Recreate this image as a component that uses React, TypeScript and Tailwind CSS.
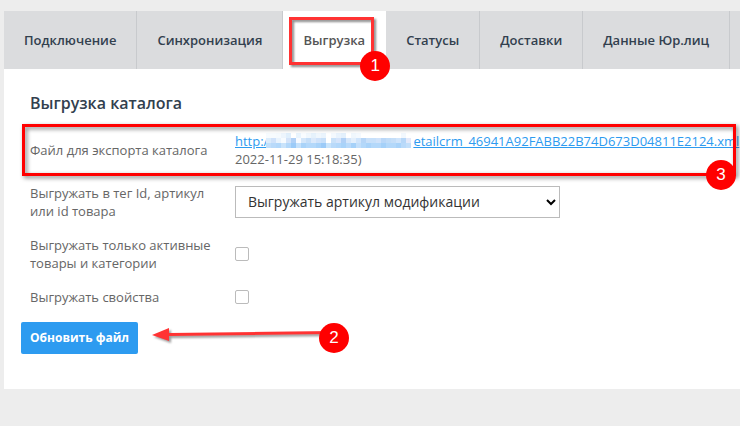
import React from 'react'

const tabs = ['Подключение', 'Синхронизация', 'Выгрузка', 'Статусы', 'Доставки', 'Данные Юр.лиц']

// hidden part of the link, 5px cells
const mosaic = [
  ['#f7fbfe', '#f7fbfe', '#f5fafe', '#edf5fd', '#e0effc', '#ffffff', '#e9f4fd', '#f9fcff', '#f0f7fd', '#e6f2fc', '#f0f7fd', '#eaf4fd', '#ffffff', '#f4f9fe', '#e9f3fd', '#e3f0fc', '#ffffff', '#f0f7fd', '#f4f9fe', '#ffffff', '#ffffff', '#ffffff', '#ffffff', '#ffffff', '#ffffff', '#ffffff', '#ffffff', '#f2f8fe', '#ffffff'],
  ['#dcecfb', '#d0e2fa', '#e9f3fd', '#f7fbff', '#d3e3f9', '#b0d0f6', '#f7faff', '#d3e6fa', '#c5def8', '#dbe9fb', '#cfe2fa', '#c7dff9', '#ffffff', '#c9e1f9', '#d5e4fb', '#b0d0f6', '#d5e6fa', '#e3effc', '#cfe4fb', '#b5d5f7', '#c9e0f9', '#c7e0fa', '#cfe2fa', '#b9d7f8', '#c0dcf8', '#c5def8', '#cfe4fb', '#b7d7f8', '#e3e9fa'],
  ['#c3dffa', '#b9dafa', '#b3d8fa', '#c9e3fb', '#b3d8fa', '#9ccbf8', '#c5e1fb', '#a9d3f9', '#b3d8fa', '#b3d8fa', '#a9d3f9', '#9ccbf8', '#c9e4fb', '#b9dafa', '#b3d8fa', '#a9d3f9', '#b9dafa', '#a5d1f9', '#c3dffa', '#b3d8fa', '#a9d3f9', '#b3d8fa', '#b3d8fa', '#a5d1f9', '#b3d8fa', '#b3d8fa', '#a9d3f9', '#b9dafa', '#c3dffa'],
]

const Badge = ({ n, className }: { n: number; className: string }) => (
  <span className={`absolute flex h-[30px] w-[30px] items-center justify-center rounded-full bg-[#ff0000] font-['Liberation_Sans',sans-serif] text-[17px] text-white ${className}`}>
    {n}
  </span>
)

const App = () => {
  return (
    <div className="min-h-screen overflow-hidden bg-[#ededed] pt-[11px] pl-1 font-['Open_Sans',sans-serif] text-[13px] leading-[18px] text-[#666]">
      <nav className="flex bg-[#dbdcde]">
        {tabs.map((tab) => (
          <div key={tab} className="relative shrink-0">
            <a
              href="#"
              className={`block border-r px-5 py-5 font-semibold ${
                tab === 'Выгрузка' ? 'border-white bg-white text-[#555]' : 'border-[#c8cacd] text-[#32404e]'
              }`}
            >
              {tab}
            </a>
            {tab === 'Выгрузка' && (
              <>
                <div className="absolute left-1.5 right-3 top-1.5 h-12 border-3 border-[#ff3333] drop-shadow-[2px_2px_1px_rgba(0,0,0,0.45)]" />
                <Badge n={1} className="-right-1 top-10 z-10" />
              </>
            )}
          </div>
        ))}
      </nav>

      <form className="bg-white px-4 pt-6 pb-[35px]" onSubmit={(e) => e.preventDefault()}>
        <h2 className="pl-2.5 text-base leading-[20px] font-semibold text-[#32404e]">Выгрузка каталога</h2>

        <div className="relative mt-[19px] flex items-center pl-2.5">
          <div className="w-[205px] shrink-0">Файл для экспорта каталога</div>
          <div className="whitespace-nowrap">
            <div className="flex">
              <a href="#" className="flex text-[#2d9bf0] underline">
                http:/
                <span className="-ml-0.5 mr-0.5 mt-px grid grid-cols-[repeat(29,5px)] auto-rows-[5px]">
                  {mosaic.flat().map((color, i) => (
                    <span key={i} style={{ backgroundColor: color }} />
                  ))}
                </span>
                etailcrm_46941A92FABB22B74D673D04811E2124.xml
              </a>
            </div>
            <div>2022-11-29 15:18:35)</div>
          </div>
          <div className="absolute -inset-y-2 left-0.5 -right-3 border-3 border-[#ff0000] drop-shadow-[2px_2px_2px_rgba(0,0,0,0.5)]" />
          <Badge n={3} className="-right-3 top-7 z-10" />
        </div>

        <div className="mt-4 flex items-center pl-2.5">
          <label htmlFor="tag" className="w-[205px] shrink-0 pr-4">Выгружать в тег Id, артикул или id товара</label>
          <div className="relative w-[325px]">
            <select id="tag" className="block h-8 w-full appearance-none border border-[#bbb] bg-white pl-3 text-sm text-[#333]">
              <option>Выгружать артикул модификации</option>
            </select>
            <svg className="pointer-events-none absolute right-1 top-3 h-2 w-2.5" viewBox="0 0 10 8" fill="none" stroke="#000" strokeWidth="2">
              <path d="M1 2l4 4 4-4" />
            </svg>
          </div>
        </div>

        <div className="mt-4 flex items-center pl-2.5">
          <label htmlFor="active" className="w-[205px] shrink-0 pr-4">Выгружать только активные товары и категории</label>
          <input id="active" type="checkbox" className="h-3.5 w-3.5 appearance-none rounded-xs border border-[#bbb] bg-white" />
        </div>

        <div className="mt-4 flex items-center pl-2.5">
          <label htmlFor="props" className="w-[205px] shrink-0 pr-4">Выгружать свойства</label>
          <input id="props" type="checkbox" className="h-3.5 w-3.5 appearance-none rounded-xs border border-[#bbb] bg-white" />
        </div>

        <div className="relative mt-4 pl-px">
          <button className="block h-8 rounded-xs bg-[#2d9bf0] px-[9px] text-xs font-bold text-white">Обновить файл</button>
          <svg className="absolute left-[132px] top-1 h-5 w-[190px] drop-shadow-[2px_2px_1px_rgba(0,0,0,0.4)]" viewBox="0 0 190 20" fill="#ff3333">
            <path d="M0 9L17 2v5L182 5v3L17 10v5z" />
          </svg>
          <Badge n={2} className="left-[299px] top-px" />
        </div>
      </form>
    </div>
  )
}

export default App
